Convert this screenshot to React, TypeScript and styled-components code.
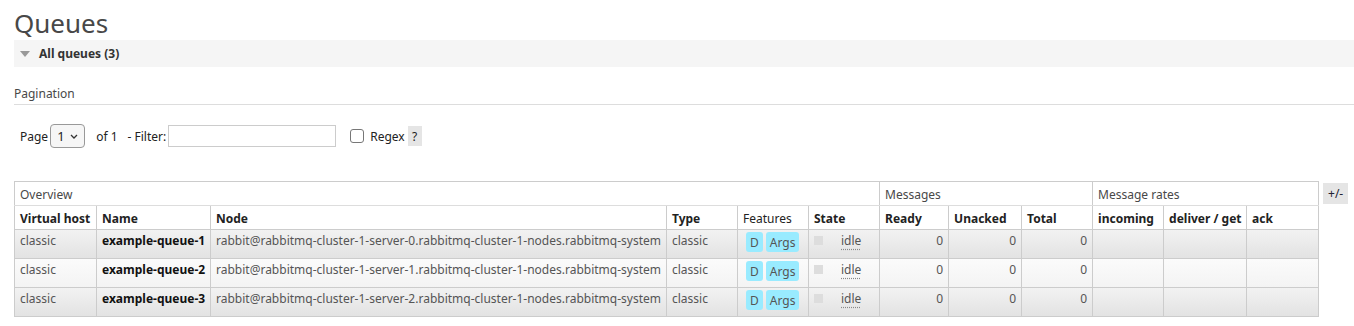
import React from 'react'
import styled, { createGlobalStyle } from 'styled-components'

const GlobalStyle = createGlobalStyle`
    html, body {
        margin: 0;
        padding: 0;
        background: #fff;
    }

    body {
        font-family: "Noto Sans", "Open Sans", sans-serif;
        font-size: 12px;
        color: #484848;
    }
`

const Page = styled.main`
    padding: 0 0 0 14px;
`

const Title = styled.h1`
    margin: 0;
    padding-top: 8px;
    height: 32px;
    font-size: 26px;
    font-weight: 400;
    line-height: 30px;
    color: #484848;
`

const SectionBar = styled.div`
    display: flex;
    align-items: center;
    gap: 9px;
    height: 27px;
    padding-left: 6px;
    background: #f5f5f5;
    font-weight: 700;
    color: #333;
`

const Triangle = styled.span`
    width: 0;
    height: 0;
    border-left: 5px solid transparent;
    border-right: 5px solid transparent;
    border-top: 6px solid #999;
`

const SubTitle = styled.h3`
    margin: 19px 0 0;
    padding-bottom: 2px;
    font-size: 12px;
    font-weight: 400;
    line-height: 16px;
    color: #484848;
    border-bottom: 1px solid #ddd;
`

const FilterRow = styled.div`
    display: flex;
    align-items: center;
    height: 24px;
    margin-top: 19px;
    padding-left: 6px;
    color: #222;
`

const SelectBox = styled.span`
    display: inline-flex;
    align-items: center;
    justify-content: space-between;
    box-sizing: border-box;
    width: 35px;
    height: 24px;
    margin-left: 2px;
    padding: 0 6px 0 6px;
    border: 1px solid #999;
    border-radius: 4px;
    background: #f6f6f6;
    font-size: 13px;
`

const Text = styled.span<{ $ml?: number }>`
    margin-left: ${p => p.$ml ?? 0}px;
`

const FilterInput = styled.input`
    box-sizing: border-box;
    width: 168px;
    height: 22px;
    margin-left: 2px;
    border: 1px solid #ccc;
    outline: none;
`

const CheckBox = styled.span`
    box-sizing: border-box;
    width: 14px;
    height: 14px;
    margin-left: 14px;
    border: 1px solid #777;
    border-radius: 3px;
    background: #fff;
`

const HelpBtn = styled.span`
    display: inline-flex;
    align-items: center;
    justify-content: center;
    width: 14px;
    height: 20px;
    margin-left: 3px;
    background: #e5e5e5;
    color: #222;
`

const TableWrap = styled.div`
    display: flex;
    align-items: flex-start;
    gap: 4px;
    margin-top: 33px;
`

const Table = styled.table`
    width: 1304px;
    table-layout: fixed;
    border-collapse: collapse;
    border: 1px solid #ccc;
`

const Col = styled.col<{ $w: number }>`
    width: ${p => p.$w}px;
`

const GroupCell = styled.th`
    box-sizing: border-box;
    height: 24px;
    padding: 1px 5px 0;
    text-align: left;
    font-weight: 400;
    color: #484848;
    border: 1px solid #ccc;
    border-bottom-color: #ddd;
`

const HeadCell = styled.th<{ $plain?: boolean }>`
    box-sizing: border-box;
    height: 24px;
    padding: 2px 5px 0;
    text-align: left;
    font-weight: ${p => (p.$plain ? 400 : 700)};
    color: #222;
    white-space: nowrap;
    border: 1px solid #ccc;
    border-top-color: #ddd;
`

const Row = styled.tr<{ $alt: boolean }>`
    background: ${p => (p.$alt
        ? 'linear-gradient(#fbfbfb, #f3f3f3)'
        : 'linear-gradient(#f2f2f2, #e2e2e2)')};
`

const Cell = styled.td<{ $num?: boolean; $bold?: boolean }>`
    height: 29px;
    padding: 2px 5px 0;
    vertical-align: top;
    text-align: ${p => (p.$num ? 'right' : 'left')};
    font-weight: ${p => (p.$bold ? 700 : 400)};
    color: ${p => (p.$bold ? '#111' : '#555')};
    white-space: nowrap;
    overflow: hidden;
    border: 1px solid #ccc;
    box-sizing: border-box;
`

const Features = styled.div`
    display: flex;
    gap: 3px;
    margin-top: 0;
    padding-left: 3px;
`

const Badge = styled.span`
    display: inline-flex;
    align-items: center;
    height: 20px;
    padding: 0 4px;
    border-radius: 3px;
    background: #99ebff;
    color: #555;
`

const StateBox = styled.div`
    display: flex;
    align-items: flex-start;
`

const Square = styled.span`
    width: 9px;
    height: 9px;
    margin-top: 4px;
    background: #ddd;
`

const Idle = styled.abbr`
    margin-left: 18px;
    color: #555;
    text-decoration: underline dotted #888;
    text-underline-offset: 4px;
`

const ToggleBtn = styled.span`
    display: inline-flex;
    align-items: center;
    justify-content: center;
    width: 25px;
    height: 21px;
    margin-top: 2px;
    background: #e5e5e5;
    font-size: 12px;
    color: #223;
`

const columns: { label: string; w: number; plain?: boolean }[] = [
    { label: 'Virtual host', w: 82 },
    { label: 'Name', w: 114 },
    { label: 'Node', w: 456 },
    { label: 'Type', w: 71 },
    { label: 'Features', w: 71, plain: true },
    { label: 'State', w: 71 },
    { label: 'Ready', w: 69 },
    { label: 'Unacked', w: 73 },
    { label: 'Total', w: 71 },
    { label: 'incoming', w: 71 },
    { label: 'deliver / get', w: 83 },
    { label: 'ack', w: 72 },
]

const queues = [0, 1, 2].map(i => ({
    vhost: 'classic',
    name: `example-queue-${i + 1}`,
    node: `rabbit@rabbitmq-cluster-1-server-${i}.rabbitmq-cluster-1-nodes.rabbitmq-system`,
    type: 'classic',
    ready: 0,
    unacked: 0,
    total: 0,
}))

export default function App() {
    return (
        <Page>
            <GlobalStyle />
            <Title>Queues</Title>

            <SectionBar>
                <Triangle />
                All queues (3)
            </SectionBar>

            <SubTitle>Pagination</SubTitle>

            <FilterRow>
                <Text>Page</Text>
                <SelectBox>
                    1
                    <svg width="8" height="5" viewBox="0 0 8 5">
                        <path d="M1 1 L4 4 L7 1" fill="none" stroke="#333" strokeWidth="1.3" />
                    </svg>
                </SelectBox>
                <Text $ml={11}>of 1</Text>
                <Text $ml={10}>- Filter:</Text>
                <FilterInput />
                <CheckBox />
                <Text $ml={6}>Regex</Text>
                <HelpBtn>?</HelpBtn>
            </FilterRow>

            <TableWrap>
                <Table>
                    <colgroup>
                        {columns.map(c => <Col key={c.label} $w={c.w} />)}
                    </colgroup>
                    <thead>
                        <tr>
                            <GroupCell colSpan={6}>Overview</GroupCell>
                            <GroupCell colSpan={3}>Messages</GroupCell>
                            <GroupCell colSpan={3}>Message rates</GroupCell>
                        </tr>
                        <tr>
                            {columns.map(c => (
                                <HeadCell key={c.label} $plain={c.plain}>{c.label}</HeadCell>
                            ))}
                        </tr>
                    </thead>
                    <tbody>
                        {queues.map((q, i) => (
                            <Row key={q.name} $alt={i % 2 === 1}>
                                <Cell>{q.vhost}</Cell>
                                <Cell $bold>{q.name}</Cell>
                                <Cell>{q.node}</Cell>
                                <Cell>{q.type}</Cell>
                                <Cell>
                                    <Features>
                                        <Badge>D</Badge>
                                        <Badge>Args</Badge>
                                    </Features>
                                </Cell>
                                <Cell>
                                    <StateBox>
                                        <Square />
                                        <Idle title="idle">idle</Idle>
                                    </StateBox>
                                </Cell>
                                <Cell $num>{q.ready}</Cell>
                                <Cell $num>{q.unacked}</Cell>
                                <Cell $num>{q.total}</Cell>
                                <Cell />
                                <Cell />
                                <Cell />
                            </Row>
                        ))}
                    </tbody>
                </Table>
                <ToggleBtn>+/-</ToggleBtn>
            </TableWrap>
        </Page>
    )
}
